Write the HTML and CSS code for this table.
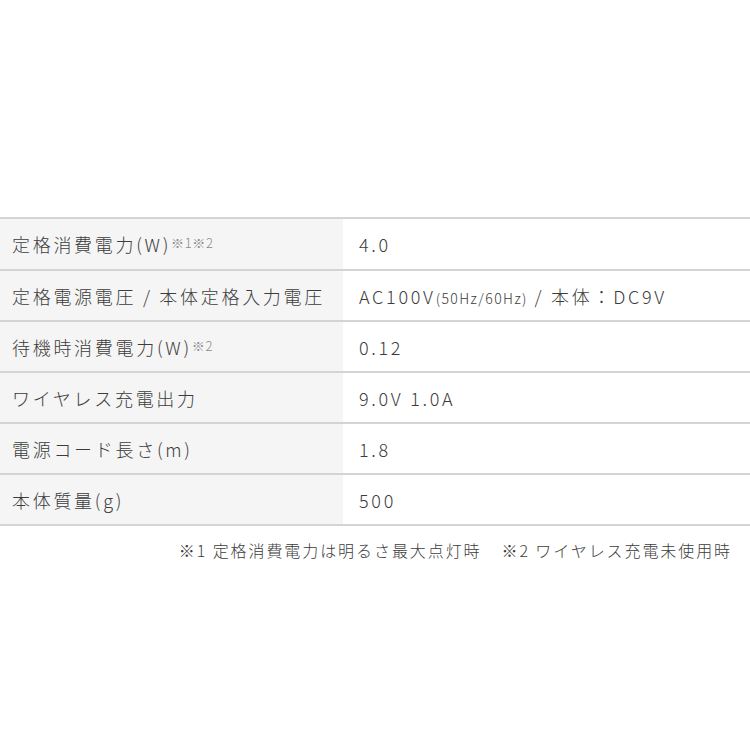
FILE: index.html
```html
<!DOCTYPE html>
<html lang="ja">
<head>
<meta charset="utf-8">
<link rel="stylesheet" href="styles.css">
</head>
<body>
<div class="page">
  <table class="spec">
    <tr><th>定格消費電力(W)<span class="note">※1※2</span></th><td>4.0</td></tr>
    <tr><th>定格電源電圧 / 本体定格入力電圧</th><td>AC100V<span class="small">(50Hz/60Hz)</span> / 本体：DC9V</td></tr>
    <tr><th>待機時消費電力(W)<span class="note">※2</span></th><td>0.12</td></tr>
    <tr><th>ワイヤレス充電出力</th><td>9.0V 1.0A</td></tr>
    <tr><th>電源コード長さ(m)</th><td>1.8</td></tr>
    <tr><th>本体質量(g)</th><td>500</td></tr>
  </table>
  <p class="foot">※1 定格消費電力は明るさ最大点灯時<span class="gap"></span>※2 ワイヤレス充電未使用時</p>
</div>
</body>
</html>
```

FILE: styles.css
```css
html, body {
  margin: 0;
  padding: 0;
  background: #ffffff;
}
body {
  font-family: "Noto Sans CJK JP", "Noto Sans", sans-serif;
  font-weight: 300;
  color: #444444;
}
.page {
  padding-top: 217px;
}
.spec {
  width: 750px;
  border-collapse: collapse;
  border-top: 2px solid #d4d4d4;
}
.spec tr {
  border-bottom: 2px solid #d4d4d4;
}
.spec th, .spec td {
  height: 49px;
  padding: 0;
  font-size: 18px;
  font-weight: 300;
  letter-spacing: 0.15em;
  text-align: left;
  vertical-align: middle;
  line-height: 1;
}
.spec tr:first-child th, .spec tr:first-child td {
  height: 50px;
}
.spec th {
  width: 331px;
  padding-left: 12px;
  background: #f5f5f5;
  color: #3c3c3c;
}
.spec td {
  padding-left: 16px;
  color: #3c3c3c;
}
.note {
  font-size: 13px;
  color: #8a8a8a;
  vertical-align: 4px;
  letter-spacing: 0.05em;
}
.small {
  font-size: 14px;
  letter-spacing: 0.1em;
}
.foot {
  margin: 12px 18px 0 0;
  text-align: right;
  font-size: 16px;
  letter-spacing: 0.12em;
  color: #3c3c3c;
}
.gap {
  display: inline-block;
  width: 20px;
}
```
